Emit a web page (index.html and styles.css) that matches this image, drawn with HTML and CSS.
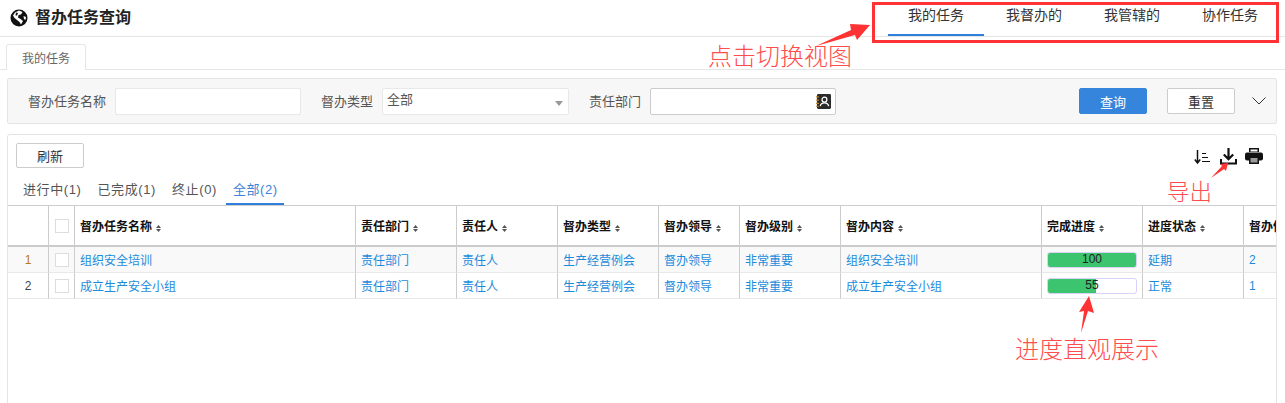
FILE: index.html
```html
<!DOCTYPE html>
<html lang="zh-CN">
<head>
<meta charset="utf-8">
<title>督办任务查询</title>
<link rel="stylesheet" href="styles.css">
</head>
<body>
<div class="page">
  <header class="header">
    <div class="brand">
      <svg class="globe" viewBox="0 0 18 18"><circle cx="9" cy="9" r="8.5" fill="#111"/><path d="M9 1.500 12.500 3 11 5.500 8.500 6 8 8.500 10.500 10 13 12 11 15.500 9.500 13 7 11 4.500 9 3 6.500 5 3.500Z" fill="#fff"/><path d="M6 3.500 8 4 7 6.500 5.500 6.500Z" fill="#111"/><path d="M13.500 7 16 8 15.500 11 14 10Z" fill="#fff"/></svg>
      <h1 class="brand-title">督办任务查询</h1>
    </div>
    <nav class="view-tabs">
      <a class="view-tab is-active">我的任务</a>
      <a class="view-tab">我督办的</a>
      <a class="view-tab">我管辖的</a>
      <a class="view-tab">协作任务</a>
    </nav>
  </header>

  <div class="page-tabs"><div class="page-tab">我的任务</div></div>

  <section class="filter">
    <label class="filter-label first">督办任务名称</label>
    <div class="field"></div>
    <label class="filter-label">督办类型</label>
    <div class="field select"><span>全部</span><i class="caret"></i></div>
    <label class="filter-label wide">责任部门</label>
    <div class="field lookup">
      <svg class="book" viewBox="0 0 16 16"><rect x="1" y="0" width="15" height="16" rx="1.500" fill="#2b2b2b"/><path d="M0 3h3M0 6.500h3M0 10h3M0 13h3" stroke="#c58a2c" stroke-width="1.200"/><circle cx="9" cy="6" r="2.600" fill="none" stroke="#fff" stroke-width="1.300"/><path d="M4.500 13c.5-2.500 2-3.500 4.500-3.500s4 1 4.500 3.500" fill="none" stroke="#fff" stroke-width="1.300"/></svg>
    </div>
    <button class="btn primary push">查询</button>
    <button class="btn reset">重置</button>
    <svg class="chevron" viewBox="0 0 14 8"><path d="M.5.500 7 7 13.500.500" fill="none" stroke="#333" stroke-width="1"/></svg>
  </section>

  <section class="panel">
    <div class="toolbar">
      <button class="btn refresh">刷新</button>
      <div class="tools">
        <svg class="tool sort" viewBox="0 0 16 14"><path d="M3.500 0v12M.8 9.500l2.700 3.500 2.700-3.500" fill="none" stroke="#111" stroke-width="1.500"/><path d="M8 3.500h4M8 7.500h6M8 11.500h8" stroke="#111" stroke-width="1"/></svg>
        <svg class="tool download" viewBox="0 0 17 17"><path d="M8.500 0v10M3.800 6.500l4.700 4.700 4.700-4.700" fill="none" stroke="#111" stroke-width="2.200"/><path d="M1 11v4.500h15V11" fill="none" stroke="#111" stroke-width="2"/></svg>
        <svg class="tool print" viewBox="0 0 18 16"><path d="M4 0h10v4H4Z" fill="#111"/><rect x="0" y="4.500" width="18" height="8" rx="2" fill="#111"/><rect x="4" y="9" width="10" height="7" fill="#111"/><rect x="5.500" y="10" width="7" height="4.500" fill="#999"/><rect x="5.500" y="1.500" width="7" height="2" fill="#fff"/></svg>
      </div>
    </div>
    <div class="status-tabs">
      <span class="status-tab">进行中(1)</span>
      <span class="status-tab">已完成(1)</span>
      <span class="status-tab">终止(0)</span>
      <span class="status-tab is-active">全部(2)</span>
    </div>
    <table class="grid">
      <colgroup>
        <col class="c-idx"><col class="c-check"><col class="c-name"><col class="c-101"><col class="c-101"><col class="c-101"><col class="c-81"><col class="c-101"><col class="c-201"><col class="c-101"><col class="c-101"><col class="c-100">
      </colgroup>
      <thead>
        <tr>
          <th></th>
          <th class="check-cell"><i class="check"></i></th>
          <th>督办任务名称<i class="sorter"></i></th>
          <th>责任部门<i class="sorter"></i></th>
          <th>责任人<i class="sorter"></i></th>
          <th>督办类型<i class="sorter"></i></th>
          <th>督办领导<i class="sorter"></i></th>
          <th>督办级别<i class="sorter"></i></th>
          <th>督办内容<i class="sorter"></i></th>
          <th>完成进度<i class="sorter"></i></th>
          <th>进度状态<i class="sorter"></i></th>
          <th>督办催办次数</th>
        </tr>
      </thead>
      <tbody>
        <tr class="odd">
          <td class="idx first-idx">1</td>
          <td class="check-cell"><i class="check"></i></td>
          <td>组织安全培训</td><td>责任部门</td><td>责任人</td><td>生产经营例会</td><td>督办领导</td><td>非常重要</td><td>组织安全培训</td>
          <td><div class="progress"><div class="progress-fill" style="width:100%"></div><span class="progress-text">100</span></div></td>
          <td>延期</td><td>2</td>
        </tr>
        <tr>
          <td class="idx">2</td>
          <td class="check-cell"><i class="check"></i></td>
          <td>成立生产安全小组</td><td>责任部门</td><td>责任人</td><td>生产经营例会</td><td>督办领导</td><td>非常重要</td><td>成立生产安全小组</td>
          <td><div class="progress"><div class="progress-fill" style="width:55%"></div><span class="progress-text">55</span></div></td>
          <td>正常</td><td>1</td>
        </tr>
      </tbody>
    </table>
  </section>

  <div class="callout-box"></div>
  <svg class="arrows" viewBox="0 0 1285 403">
    <path d="M816 46 851 30 850 24 870 25 857 40 855 35Z" fill="#ff3333"/>
    <path d="M1211 178 1222 166 1220 164 1228 163 1226 171 1224 169Z" fill="#ff3333"/>
    <path d="M1081 333 1084 311 1079 312 1089 296 1094 313 1088 311Z" fill="#ff3333"/>
  </svg>
  <div class="note note-switch">点击切换视图</div>
  <div class="note note-export">导出</div>
  <div class="note note-progress">进度直观展示</div>
</div>
</body>
</html>
```

FILE: styles.css
```css
* { box-sizing: border-box; }
html, body { margin: 0; padding: 0; background: #fff; }
body { font-family: "Liberation Sans", "Noto Sans CJK SC", sans-serif; font-size: 12px; color: #333; }
.page { position: relative; width: 1285px; height: 403px; overflow: hidden; }

.header { display: flex; justify-content: space-between; height: 37px; border-bottom: 1px solid #e6e6e6; }
.brand { display: flex; align-items: center; padding: 0 0 0 10px; }
.globe { width: 18px; height: 18px; }
.brand-title { margin: 0 0 0 7px; font-size: 16px; font-weight: 700; color: #222; line-height: 22px; }
.view-tabs { display: flex; gap: 2px; padding-right: 7px; }
.view-tab { width: 96px; height: 36px; text-align: center; font-size: 14px; line-height: 30px; color: #333; }
.view-tab.is-active { border-bottom: 2px solid #2f80dc; }

.page-tabs { height: 33px; padding: 7px 0 0 6px; border-bottom: 1px solid #e6e6e6; }
.page-tab { width: 80px; height: 26px; background: #fff; border: 1px solid #e6e6e6; border-bottom: 0; border-radius: 3px 3px 0 0; text-align: center; font-size: 12px; line-height: 29px; color: #666; }

.filter { display: flex; align-items: center; height: 46px; margin: 8px 8px 0 7px; background: #f7f7f7; border: 1px solid #e4e4e4; border-radius: 2px; }
.filter-label { margin: 0 9px 2px 20px; font-size: 13px; color: #555; white-space: nowrap; }
.filter-label.wide { margin-left: 21px; }
.field { position: relative; width: 186px; height: 27px; background: #fff; border: 1px solid #e8e8e8; border-radius: 2px; font-size: 13px; line-height: 22px; color: #555; }
.select { width: 187px; }
.select span { padding-left: 4px; }
.select + .filter-label { margin-left: 20px; }
.caret { position: absolute; right: 5px; top: 12px; border: 4px solid transparent; border-top: 5px solid #999; border-bottom: 0; }
.lookup { display: flex; align-items: center; justify-content: flex-end; padding-right: 4px; border-color: #ccc; }
.book { width: 15px; height: 15px; }
.btn { height: 26px; width: 68px; padding: 0; background: #fff; border: 1px solid #ccc; border-radius: 2px; font: 13px "Liberation Sans", "Noto Sans CJK SC", sans-serif; color: #333; }
.btn.primary { background: #3585dc; border-color: #3585dc; color: #fff; }
.push { margin-left: auto; }
.reset { margin-left: 20px; }
.chevron { width: 14px; height: 8px; margin: 0 10px 0 17px; }

.panel { height: 280px; margin: 10px 8px 0 7px; border: 1px solid #e4e4e4; border-radius: 3px 3px 0 0; overflow: hidden; }
.toolbar { display: flex; justify-content: space-between; padding: 8px 13px 0 8px; height: 33px; }
.refresh { height: 25px; }
.tools { display: flex; align-items: flex-start; padding-top: 5px; }
.tool { display: block; }
.sort { width: 16px; height: 14px; margin-top: 2px; }
.download { width: 17px; height: 17px; margin-left: 10px; }
.print { width: 18px; height: 16px; margin-left: 8px; }

.status-tabs { display: flex; gap: 2px; height: 37px; padding: 10px 0 0 8px; }
.status-tab { height: 27px; padding: 0 7px; font-size: 13px; letter-spacing: .6px; line-height: 24px; color: #555; white-space: nowrap; }
.status-tab.is-active { width: 58px; color: #3d83d6; border-bottom: 2px solid #2f80dc; }

.grid { table-layout: fixed; width: 1335px; border-collapse: separate; border-spacing: 0; font-size: 12px; }
.c-idx { width: 41px; } .c-check { width: 26px; } .c-name { width: 281px; }
.c-100 { width: 100px; } .c-81 { width: 81px; } .c-201 { width: 201px; } .c-101 { width: 101px; }
.grid th { height: 42px; padding: 0 5px; text-align: left; font-weight: 700; color: #111; background: #fff; border-top: 1px solid #ccc; border-bottom: 2px solid #ccc; border-right: 1px solid #ccc; white-space: nowrap; overflow: hidden; }
.grid td { height: 26px; padding: 0 5px; color: #1b8bdc; border-bottom: 1px solid #e8e8e8; border-right: 1px solid #ccc; white-space: nowrap; overflow: hidden; }
.odd td { background: #f9f9f9; }
.grid .idx { padding: 0; text-align: center; color: #444; }
.grid .first-idx { color: #b87a14; }
.grid .check-cell { padding: 0 0 0 6px; }
.check { display: block; width: 14px; height: 14px; background: #fff; border: 1px solid #ddd; }
.sorter { display: inline-block; position: relative; width: 5px; height: 7px; margin-left: 4px; vertical-align: -1px; }
.sorter::before, .sorter::after { content: ""; position: absolute; left: 0; width: 5px; height: 3px; background: #555; }
.sorter::before { top: 0; clip-path: polygon(50% 0, 100% 100%, 0 100%); }
.sorter::after { bottom: 0; clip-path: polygon(0 0, 100% 0, 50% 100%); }
.progress { position: relative; height: 16px; width: 90px; border: 1px solid #d8d2f6; border-radius: 3px; overflow: hidden; background: #fff; }
.progress-fill { height: 100%; background: #3cc46f; }
.progress-text { position: absolute; inset: 0; text-align: center; font-size: 12px; line-height: 13px; color: #222; }

.callout-box { position: absolute; left: 872px; top: 2px; width: 407px; height: 41px; border: 3px solid #ff3333; }
.arrows { position: absolute; inset: 0; width: 1285px; height: 403px; pointer-events: none; }
.note { position: absolute; font-family: "Noto Sans CJK SC", sans-serif; font-weight: 300; color: #ff4d4d; font-size: 24px; line-height: 28px; white-space: nowrap; }
.note-switch { left: 708px; top: 41px; }
.note-export { left: 1167px; top: 176px; font-size: 22.500px; }
.note-progress { left: 1015px; top: 334px; }
```
